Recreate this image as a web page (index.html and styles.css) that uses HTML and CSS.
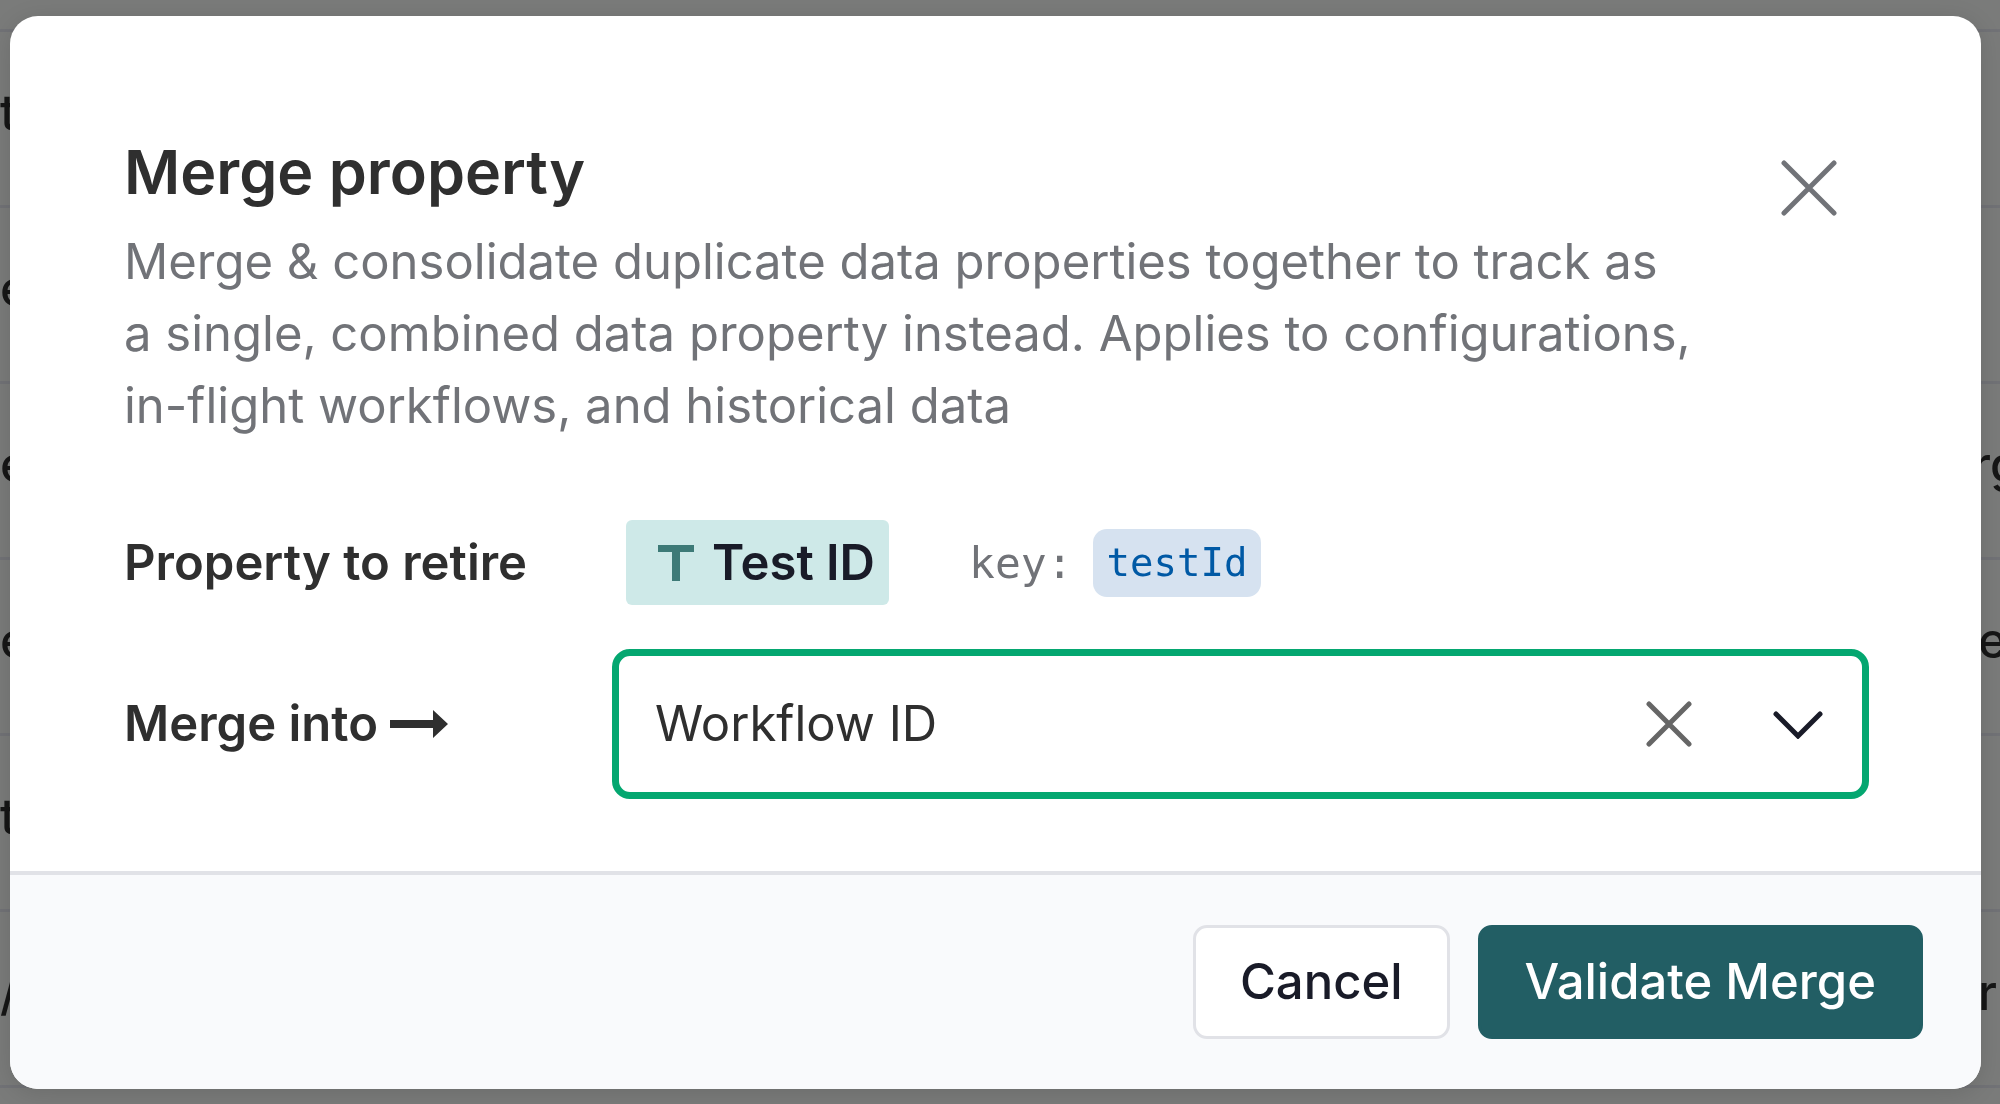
FILE: index.html
```
<!DOCTYPE html>
<html lang="en">
<head>
<meta charset="utf-8">
<meta name="viewport" content="width=device-width, initial-scale=1">
<title>Merge property</title>
<link rel="stylesheet" href="styles.css">
</head>
<body>
<main class="page">
  <div class="row row-first"></div>
  <div class="row"><span>t</span></div>
  <div class="row"><span>e</span></div>
  <div class="row"><span>e</span><span class="tail tail-wide">rg</span></div>
  <div class="row"><span>e</span><span class="tail">e</span></div>
  <div class="row"><span>t</span></div>
  <div class="row"><span>/</span><span class="tail">r</span></div>
</main>

<div class="overlay">
  <section class="dialog" role="dialog" aria-modal="true" aria-labelledby="dialog-title">
    <div class="dialog-body">
      <header class="dialog-header">
        <div class="intro">
          <h1 class="title" id="dialog-title">Merge property</h1>
          <p class="description">Merge &amp; consolidate duplicate data properties together to track as a single, combined data property instead. Applies to configurations, in-flight workflows, and historical data</p>
        </div>
        <button class="icon-button close" type="button" aria-label="Close">
          <svg width="56" height="56" viewBox="0 0 56 56"><path d="M3 3L53 53M53 3L3 53"/></svg>
        </button>
      </header>

      <div class="field">
        <span class="label">Property to retire</span>
        <div class="property">
          <span class="tag">
            <svg class="tag-icon" width="36" height="36" viewBox="0 0 36 36" aria-hidden="true"><path d="M0 0H36V7H22V36H14V7H0Z"/></svg>
            Test ID
          </span>
          <span class="key">key:</span>
          <code class="code">testId</code>
        </div>
      </div>

      <div class="field">
        <label class="label" for="target">Merge into
          <svg class="arrow" width="58" height="28" viewBox="0 0 58 28" aria-hidden="true"><path d="M0 10H43V0L58 14L43 28V18H0Z"/></svg>
        </label>
        <div class="select-box">
          <select class="select" id="target">
            <option>Workflow ID</option>
          </select>
          <button class="icon-button clear" type="button" aria-label="Clear">
            <svg width="46" height="46" viewBox="0 0 46 46"><path d="M3 3L43 43M43 3L3 43"/></svg>
          </button>
          <svg class="chevron" width="52" height="30" viewBox="0 0 52 30" aria-hidden="true"><path d="M4 5L26 27L48 5"/></svg>
        </div>
      </div>
    </div>

    <footer class="dialog-footer">
      <button class="button" type="button">Cancel</button>
      <button class="button button-primary" type="button">Validate Merge</button>
    </footer>
  </section>
</div>
</body>
</html>
```

FILE: styles.css
```
* {
  box-sizing: border-box;
}

body {
  margin: 0;
  font-family: Inter, "Liberation Sans", sans-serif;
  font-size: 49px;
  line-height: 72px;
  color: #2f2f2f;
  background: #7a7b7a;
}

/* Table behind the dialog */
.page {
  height: 100vh;
  overflow: hidden;
}

.row {
  display: flex;
  align-items: center;
  justify-content: space-between;
  height: 176px;
  padding-bottom: 12px;
  border-bottom: 3px solid #717276;
  font-weight: 500;
  color: #161616;
}

.row-first {
  height: 32px;
}

.tail {
  width: 22px;
  margin-left: auto;
}

.tail-wide {
  width: 28px;
}

/* Dialog */
.overlay {
  position: fixed;
  inset: 0;
  overflow: auto;
  padding: 16px 19px 16px 10px;
}

.dialog {
  overflow: hidden;
  border-radius: 28px;
  background: #fff;
  box-shadow: 0 4px 24px rgba(0, 0, 0, 0.12);
}

.dialog-body {
  display: flex;
  flex-direction: column;
  gap: 44px;
  padding: 114px 112px 72px 114px;
}

.dialog-header {
  display: flex;
  align-items: flex-start;
  justify-content: space-between;
  padding-bottom: 34px;
}

.intro {
  display: flex;
  flex-direction: column;
  gap: 12px;
  max-width: 1568px;
}

.title {
  margin: 0;
  font-size: 61px;
  line-height: 84px;
  font-weight: 600;
}

.description {
  margin: 0;
  color: #717378;
}

.icon-button {
  display: flex;
  padding: 0;
  border: 0;
  background: none;
  color: #717378;
  cursor: pointer;
}

.icon-button svg,
.chevron {
  fill: none;
  stroke: currentColor;
  stroke-width: 5;
  stroke-linecap: round;
}

.close {
  margin: 30px 32px 0 0;
}

.field {
  display: grid;
  grid-template-columns: 488px 1fr;
  align-items: center;
}

.label {
  display: flex;
  align-items: center;
  gap: 12px;
  font-weight: 600;
}

.arrow {
  fill: currentColor;
}

.property {
  display: flex;
  align-items: center;
  padding-left: 14px;
}

.tag {
  display: flex;
  align-items: center;
  gap: 18px;
  height: 85px;
  padding: 0 14px 0 32px;
  border-radius: 6px;
  background: #cee9e8;
  color: #191b28;
  font-weight: 600;
}

.tag-icon {
  fill: #3d7a77;
}

.key {
  margin: 0 20px 0 80px;
  font-family: "DejaVu Sans Mono", monospace;
  font-size: 43px;
  color: #717378;
}

.code {
  padding: 0 14px;
  border-radius: 14px;
  background: #d6e2f0;
  color: #0059a5;
  font-family: "DejaVu Sans Mono", monospace;
  font-size: 39px;
  line-height: 68px;
}

.select-box {
  display: flex;
  align-items: center;
  height: 150px;
  padding-right: 38px;
  border: 7px solid #04a770;
  border-radius: 18px;
}

.select {
  flex: 1;
  align-self: stretch;
  padding: 0 36px;
  border: 0;
  outline: 0;
  appearance: none;
  background: none;
  color: inherit;
  font: inherit;
}

.clear {
  margin-right: 80px;
  color: #666;
}

.chevron {
  color: #191b28;
  pointer-events: none;
}

.dialog-footer {
  display: flex;
  justify-content: flex-end;
  gap: 28px;
  padding: 50px 58px;
  border-top: 4px solid #e1e2e7;
  background: #f9fafc;
}

.button {
  height: 114px;
  padding: 0 44px;
  border: 3px solid #e1e2e7;
  border-radius: 14px;
  background: #fff;
  color: #191b28;
  font: inherit;
  font-weight: 500;
  cursor: pointer;
}

.button-primary {
  border-color: #225e64;
  background: #225e64;
  color: #fff;
}
```
